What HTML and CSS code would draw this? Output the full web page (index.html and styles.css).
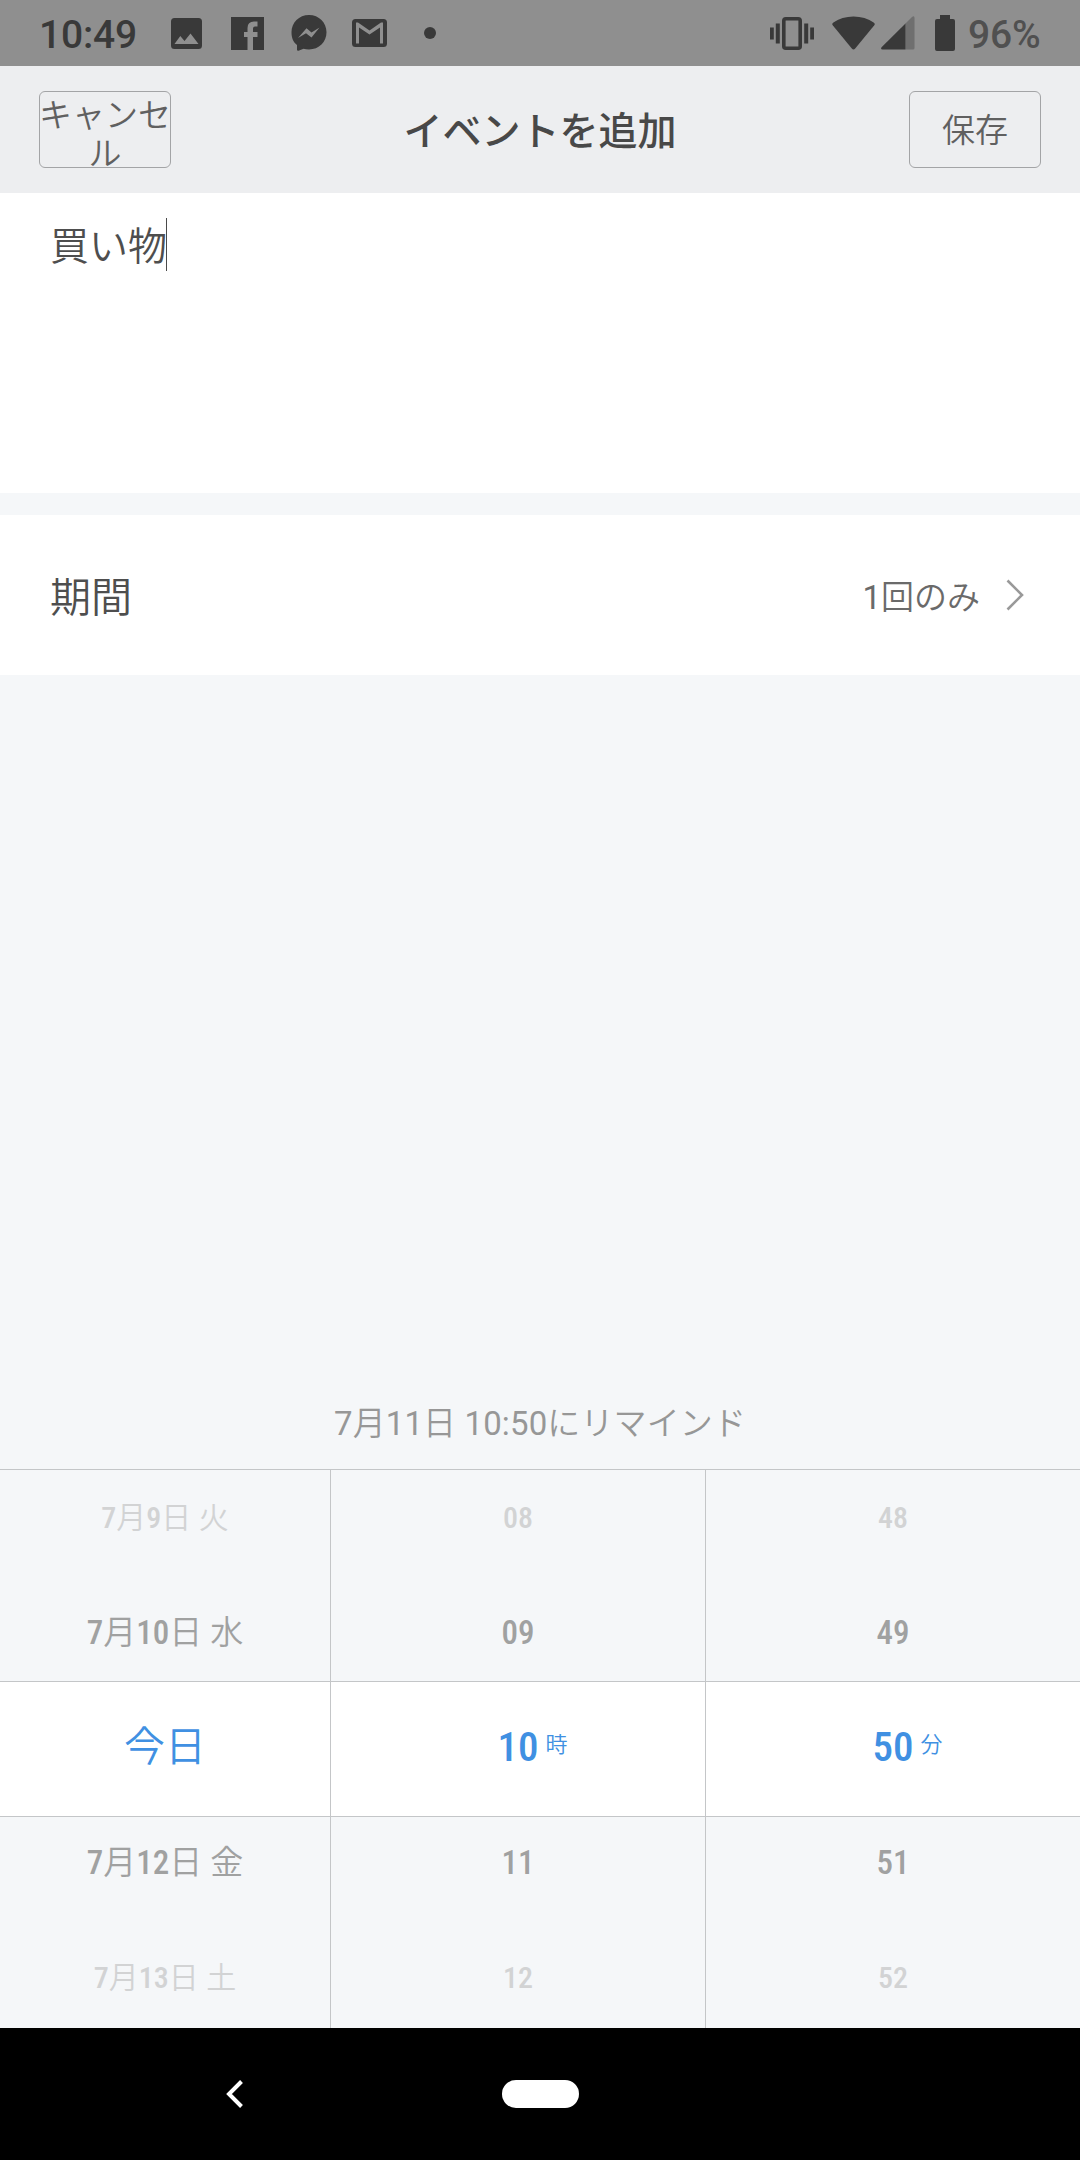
FILE: index.html
```html
<!DOCTYPE html>
<html lang="ja">
<head>
<meta charset="utf-8">
<title>イベントを追加</title>
<link rel="stylesheet" href="styles.css">
</head>
<body>
<div class="screen">
  <div class="status">
    <span class="clock">10:49</span>
    <svg class="ico-image" width="31" height="31" viewBox="0 0 31 31"><path fill="currentColor" fill-rule="evenodd" d="M3.500 0H27.500A3.500 3.500 0 0 1 31 3.500V27.500A3.500 3.500 0 0 1 27.500 31H3.500A3.500 3.500 0 0 1 0 27.500V3.500A3.500 3.500 0 0 1 3.500 0ZM3.500 26H27.500L19.500 15.500L13.500 23L9.300 18Z"/></svg>
    <svg class="ico-fb" width="33" height="33" viewBox="0 0 33 33"><path fill="currentColor" d="M0 0H33V33H22V20H26.500V15H22V11.500Q22 9.500 24 9.500H26.500V4.500H23Q16.500 4.500 16.500 11V15H13V20H16.500V33H0Z"/></svg>
    <svg class="ico-msg" width="36" height="36" viewBox="0 0 36 36"><path fill="currentColor" fill-rule="evenodd" d="M18 0C28 0 35.500 7.500 35.500 17.300S28 34.500 18 34.500Q15 34.500 12.500 33.700L7.500 35.700Q6 36 6 34.500V30C2 27 .5 22.500 .5 17.300C.5 7.500 8 0 18 0ZM7 23L15.500 13.200L20.500 17.500L28.500 12.500L20.500 22.500L15 18.300Z"/></svg>
    <svg class="ico-gmail" width="35" height="28" viewBox="0 0 35 28"><path fill="currentColor" fill-rule="evenodd" d="M3.500 0H31.500A3.500 3.500 0 0 1 35 3.500V24.500A3.500 3.500 0 0 1 31.500 28H3.500A3.500 3.500 0 0 1 0 24.500V3.500A3.500 3.500 0 0 1 3.500 0ZM4 3.500V24.500H7V8.500L17.500 15.500L28 8.500V24.500H31V3.500H29L17.500 11.500L6 3.500Z"/></svg>
    <span class="dot"></span>
    <span class="spacer"></span>
    <svg class="ico-vib" width="44" height="33" viewBox="0 0 44 33"><rect x="13.800" y="1.800" width="16.400" height="29.400" rx="2" fill="none" stroke="currentColor" stroke-width="3.600"/><path fill="currentColor" d="M0 10.500H3.800V22.500H0ZM5.800 6.500H9.800V26.500H5.800ZM34.200 6.500H38.200V26.500H34.200ZM40.200 10.500H44V22.500H40.200Z"/></svg>
    <svg class="ico-wifi" width="43" height="34" viewBox="0 0 43 34"><path fill="currentColor" d="M.7 9.300Q-.3 8 1 6.800Q10 .5 21.500 .5T42 6.800Q43.300 8 42.300 9.300L23.200 32.500Q21.500 34.500 19.800 32.500Z"/></svg>
    <svg class="ico-sig" width="34" height="34" viewBox="0 0 34 34"><path fill="#6f6f6f" d="M24.500 7.500L31 1Q33.500-.8 33.500 2V32Q33.500 33.500 32 33.500H24.500Z"/><path fill="currentColor" d="M24.500 7.500V33.500H1.500Q-1 33 .8 31Z"/></svg>
    <svg class="ico-bat" width="20" height="36" viewBox="0 0 20 36"><path fill="currentColor" d="M5 0H15V4H18Q20 4 20 6V34Q20 36 18 36H2Q0 36 0 34V6Q0 4 2 4H5Z"/></svg>
    <span class="percent">96%</span>
  </div>

  <header class="header">
    <button class="btn btn-cancel">キャンセ<br>ル</button>
    <h1 class="title">イベントを追加</h1>
    <button class="btn btn-save">保存</button>
  </header>

  <div class="note"><span class="note-text">買い物</span><span class="caret"></span></div>

  <div class="row">
    <span class="row-label">期間</span>
    <span class="row-value"><span class="num">1</span>回のみ</span>
    <svg class="chevron" width="18" height="32" viewBox="0 0 18 32"><path d="M1.500 1.500L16 16L1.500 30.500" fill="none" stroke="currentColor" stroke-width="2.600"/></svg>
  </div>

  <div class="space"></div>
  <p class="remind"><span class="num">7</span>月<span class="num">11</span>日<span class="num"> 10:50</span>にリマインド</p>

  <div class="picker">
    <div class="band"></div>
    <div class="col">
      <div class="item far"><b>7</b>月<b>9</b>日 火</div>
      <div class="item near"><b>7</b>月<b>10</b>日 水</div>
      <div class="item current">今日</div>
      <div class="item near"><b>7</b>月<b>12</b>日 金</div>
      <div class="item far"><b>7</b>月<b>13</b>日 土</div>
    </div>
    <div class="col">
      <div class="item far"><b>08</b></div>
      <div class="item near"><b>09</b></div>
      <div class="item current with-unit"><b>10</b><span class="unit">時</span></div>
      <div class="item near"><b>11</b></div>
      <div class="item far"><b>12</b></div>
    </div>
    <div class="col">
      <div class="item far"><b>48</b></div>
      <div class="item near"><b>49</b></div>
      <div class="item current with-unit"><b>50</b><span class="unit">分</span></div>
      <div class="item near"><b>51</b></div>
      <div class="item far"><b>52</b></div>
    </div>
  </div>

  <nav class="nav">
    <svg class="back" width="18" height="28" viewBox="0 0 18 28"><path d="M15.500 1.500L3 14L15.500 26.500" fill="none" stroke="#fff" stroke-width="4"/></svg>
    <span class="home"></span>
  </nav>
</div>
</body>
</html>
```
FILE: styles.css
```css
* { box-sizing: border-box; }
body { margin: 0; }
.screen {
  width: 1080px;
  height: 2160px;
  display: flex;
  flex-direction: column;
  background: #f5f7f9;
  color: #4e4e4e;
  font-family: Roboto, "Noto Sans CJK JP", sans-serif;
  font-weight: 350;
  overflow: hidden;
}
.num { font-weight: 400; }
.status {
  height: 66px;
  flex: none;
  display: flex;
  align-items: center;
  padding: 0 39px 0 39px;
  background: #8f8f8f;
  color: #393939;
}
.status svg { display: block; flex: none; }
.clock, .percent { font-size: 39px; line-height: 64px; font-weight: 500; padding-top: 4px; letter-spacing: -.2px; }
.clock { width: 132px; }
.ico-fb { margin-left: 29px; }
.ico-msg { margin-left: 27px; }
.ico-gmail { margin-left: 25px; }
.dot { width: 12px; height: 12px; margin-left: 37px; border-radius: 50%; background: currentColor; }
.spacer { flex: 1; }
.ico-wifi { margin-left: 18px; }
.ico-sig { margin-left: 6px; }
.ico-bat { margin-left: 20px; }
.percent { width: 73px; margin-left: 13px; color: #505050; }

.header {
  height: 127px;
  flex: none;
  display: flex;
  align-items: center;
  justify-content: space-between;
  padding: 0 39px;
  background: #edeef0;
}
.btn {
  width: 132px;
  height: 77px;
  padding: 2px 0 0;
  display: flex;
  align-items: center;
  justify-content: center;
  border: 1px solid #a3a4a6;
  border-radius: 6px;
  background: none;
  color: #606060;
  font: 350 33px/38px Roboto, "Noto Sans CJK JP", sans-serif;
  white-space: nowrap;
}
.btn-cancel { padding-top: 10px; }
.title { margin: 0; padding-top: 5px; font-size: 39px; line-height: 58px; font-weight: 500; color: #484848; }

.note {
  height: 300px;
  flex: none;
  display: flex;
  padding: 25px 50px;
  background: #fff;
}
.note-text { width: 116px; font-size: 39px; line-height: 59px; white-space: nowrap; }
.caret { width: 1px; height: 53px; background: #4a4a4a; }

.row {
  height: 160px;
  flex: none;
  margin-top: 22px;
  display: flex;
  align-items: center;
  padding: 0 56px 1px 50px;
  background: #fff;
}
.row-label { flex: 1; margin-top: -2px; font-size: 41px; }
.row-value { font-size: 33px; color: #6a6a6a; }
.chevron { margin-left: 26px; color: #999; }

.space { flex: 1; }
.remind {
  margin: 0;
  height: 92px;
  padding-top: 1px;
  line-height: 92px;
  text-align: center;
  font-size: 33px;
  letter-spacing: .12px;
  color: #979797;
}
.picker {
  position: relative;
  height: 559px;
  flex: none;
  display: grid;
  grid-template-columns: 331px 375px 374px;
  border-top: 1px solid #c4c6c8;
  overflow: hidden;
}
.band {
  position: absolute;
  left: 0;
  right: 0;
  top: 211px;
  height: 136px;
  background: #fff;
  border: solid #c4c6c8;
  border-width: 1px 0;
}
.col {
  position: relative;
  height: 558px;
  display: flex;
  flex-direction: column;
  justify-content: center;
  padding-bottom: 3px;
  border-right: 1px solid #c4c6c8;
}
.col:last-child { border-right: 0; }
.item {
  height: 115px;
  flex: none;
  line-height: 115px;
  text-align: center;
  white-space: pre;
}
.item b { font-weight: 500; font-stretch: 85%; }
.far { font-size: 30px; color: #d2d3d4; }
.near { font-size: 33px; color: #a0a1a1; }
.current { font-size: 41px; color: #4090e2; }
.with-unit { display: grid; grid-template-columns: 1fr auto 1fr; }
.with-unit b { grid-column: 2; }
.unit { padding-left: 7px; line-height: 109px; text-align: left; font-size: 22px; }

.nav {
  height: 132px;
  flex: none;
  display: flex;
  align-items: center;
  background: #000;
}
.back { margin-left: 226px; }
.home { width: 77px; height: 28px; margin-left: 258px; border-radius: 14px; background: #fff; }
```
